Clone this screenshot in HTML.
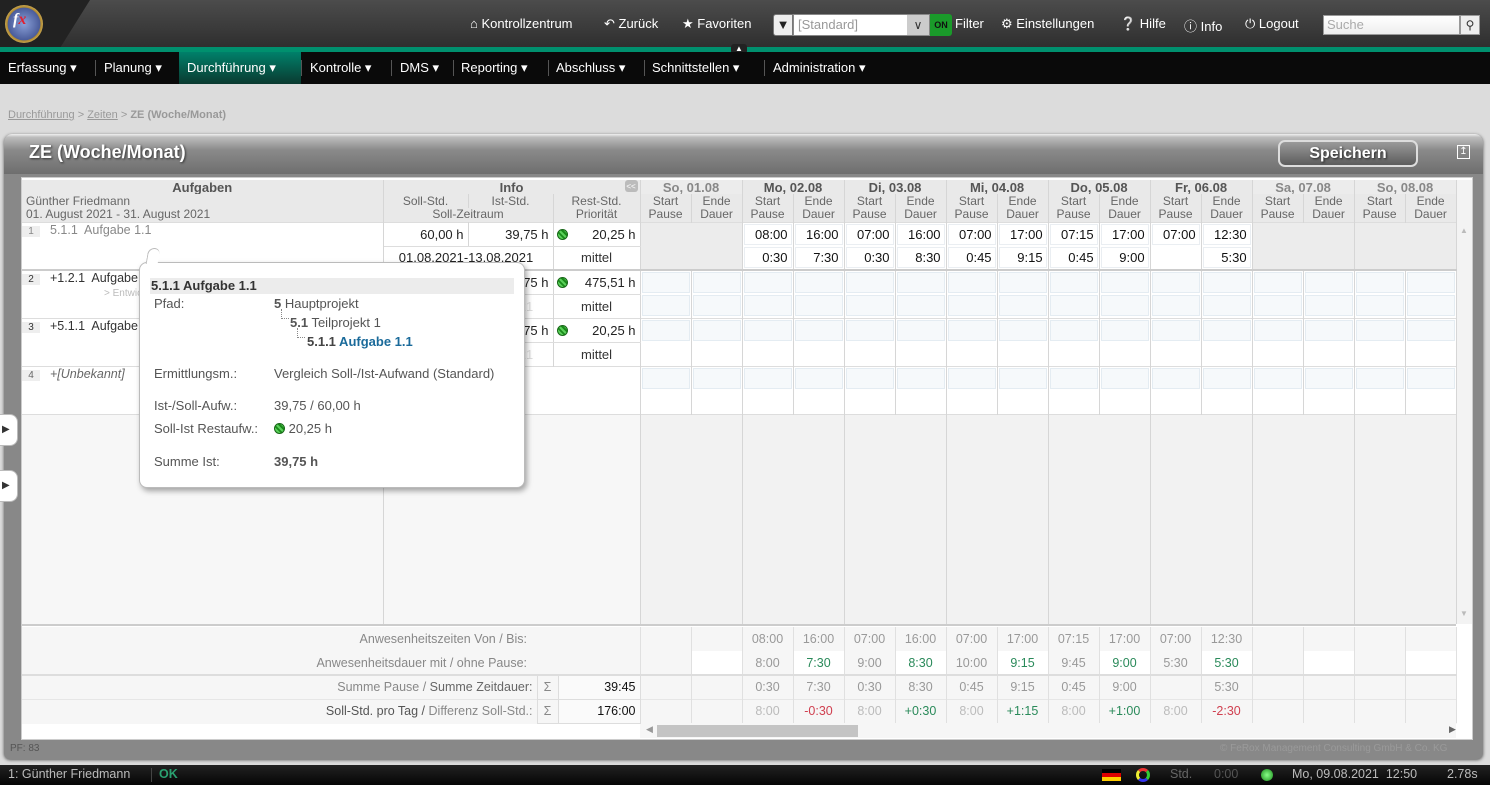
<!DOCTYPE html>
<html><head><meta charset="utf-8"><style>
*{box-sizing:border-box;margin:0;padding:0}
body{width:1490px;height:785px;overflow:hidden;background:#dcdcdc;font-family:"Liberation Sans",sans-serif;font-size:12px;color:#333;position:relative}
.a{position:absolute}
#top{left:0;top:0;width:1490px;height:48px;background:linear-gradient(#4c4c4c,#3a3a3a 60%,#2e2e2e)}
#green{left:0;top:47px;width:1490px;height:5px;background:#00906e}
#nav{left:0;top:52px;width:1490px;height:32px;background:#0a0a0a}
.tl{color:#fff;font-size:13px;top:16px;white-space:nowrap}
.mi{position:absolute;top:0;height:32px;line-height:31px;color:#fff;font-size:13px;padding:0 8px;white-space:nowrap}
.sep{position:absolute;top:8px;width:1px;height:16px;background:#555}
table{border-collapse:collapse;table-layout:fixed}
td{padding:0;white-space:nowrap;overflow:hidden}
#g td{border-right:1px solid #d6d6d6}
.h{background:#e9e9e9;color:#666;text-align:center;font-size:12px;line-height:13px}
.hb{font-weight:bold;color:#555;font-size:13px}
.we{background:#ececec}
.ib{display:block;margin:1px;height:21px;background:#fff;border:1px solid #eaeef2;text-align:right;padding-right:3px;line-height:20px;font-size:13px;color:#111}
.eb{display:block;margin:1px;height:21px;background:#f6f9fb;border:1px solid #e4ecf2}
.r{text-align:right;padding-right:4px !important;font-size:13px;color:#222}
.f td{border-right:1px solid #e0e0e0;text-align:center;font-size:12.5px;color:#999;height:24px}
.gr{color:#2a8a5a !important}.rd{color:#d04050 !important}
.dot{display:inline-block;width:11px;height:11px;border-radius:50%;background:repeating-linear-gradient(45deg,#1a8a1a 0 2px,#5ad05a 2px 4px);border:1px solid #176617;vertical-align:-1px}
</style></head><body>
<div id="top" class="a">
 <div class="a" style="left:0;top:0;width:90px;height:48px;background:#222;clip-path:polygon(0 0,90px 0,60px 48px,0 48px)"></div>
 <div class="a" style="left:5px;top:5px;width:38px;height:38px;border-radius:50%;background:radial-gradient(#8aa0d8,#4a5c9a 60%,#b08a30 62%,#e0c070 80%,#8a6a20);"></div>
 <div class="a" style="left:13px;top:11px;color:#fff;font:italic bold 16px 'Liberation Serif',serif">f<span style="color:#e02030">x</span></div>
 <div class="a tl" style="left:470px">&#8962; Kontrollzentrum</div>
 <div class="a tl" style="left:604px">&#8630; Zurück</div>
 <div class="a tl" style="left:682px">&#9733; Favoriten</div>
 <div class="a" style="left:773px;top:14px;width:20px;height:22px;background:#eee;border:1px solid #777;border-radius:3px 0 0 3px;font-size:13px;text-align:center;line-height:20px;color:#222">&#9660;</div>
 <div class="a" style="left:793px;top:14px;width:137px;height:22px;background:#fff;border:1px solid #888;color:#999;font-size:13px;line-height:20px;padding-left:4px">[Standard]</div>
 <div class="a" style="left:907px;top:15px;width:22px;height:20px;background:#ccc;text-align:center;color:#333;line-height:20px">&#8744;</div>
 <div class="a" style="left:930px;top:14px;width:22px;height:22px;background:#1a9a2a;color:#111;font-size:9px;font-weight:bold;text-align:center;line-height:22px;border-radius:0 3px 3px 0">ON</div>
 <div class="a tl" style="left:955px">Filter</div>
 <div class="a tl" style="left:1001px">&#9881; Einstellungen</div>
 <div class="a tl" style="left:1120px">&#10068; Hilfe</div>
 <div class="a tl" style="left:1184px">&#9432; Info</div>
 <div class="a tl" style="left:1245px">&#9211; Logout</div>
 <div class="a" style="left:1323px;top:15px;width:137px;height:20px;background:linear-gradient(#fff,#eee);border:1px solid #999;color:#aaa;font-size:13px;line-height:18px;padding-left:3px">Suche</div>
 <div class="a" style="left:1460px;top:15px;width:20px;height:20px;background:#eee;border:1px solid #999;text-align:center;line-height:18px;color:#333">&#9906;</div>
</div>
<div id="green" class="a"></div>
<div class="a" style="left:731px;top:44px;width:16px;height:10px;background:#222;border-radius:3px;color:#fff;font-size:8px;text-align:center;line-height:10px">&#9650;</div>
<div id="nav" class="a">
 <div class="mi" style="left:0">Erfassung ▾</div><div class="sep" style="left:95px"></div>
 <div class="mi" style="left:96px">Planung ▾</div><div class="sep" style="left:179px"></div>
 <div class="mi" style="left:179px;width:122px;background:linear-gradient(#00806a,#0a3a30)">Durchführung ▾</div><div class="sep" style="left:301px"></div>
 <div class="mi" style="left:302px">Kontrolle ▾</div><div class="sep" style="left:391px"></div>
 <div class="mi" style="left:392px">DMS ▾</div><div class="sep" style="left:453px"></div>
 <div class="mi" style="left:453px">Reporting ▾</div><div class="sep" style="left:548px"></div>
 <div class="mi" style="left:548px">Abschluss ▾</div><div class="sep" style="left:644px"></div>
 <div class="mi" style="left:644px">Schnittstellen ▾</div><div class="sep" style="left:764px"></div>
 <div class="mi" style="left:765px">Administration ▾</div>
</div>
<div class="a" style="left:8px;top:109px;font-size:11px;color:#999"><u>Durchführung</u> &gt; <u>Zeiten</u> &gt; <b>ZE (Woche/Monat)</b></div>

<div class="a" style="left:4px;top:134px;width:1479px;height:625px;background:#888;border-radius:8px 8px 6px 6px;box-shadow:0 1px 3px #555"></div>
<div class="a" style="left:4px;top:134px;width:1479px;height:40px;background:linear-gradient(#f0f0f0 0,#bdbdbd 8%,#8a8a8a 40%,#6e6e6e);border-radius:8px 8px 0 0"></div>
<div class="a" style="left:29px;top:142px;color:#fff;font-size:18px;font-weight:bold;text-shadow:1px 1px 2px #333">ZE (Woche/Monat)</div>
<div class="a" style="left:1278px;top:140px;width:140px;height:27px;border-radius:7px;border:2px solid #ddd;background:linear-gradient(#9a9a9a,#5c5c5c);color:#fff;font-weight:bold;font-size:16px;text-align:center;line-height:23px;text-shadow:1px 1px 2px #222">Speichern</div>
<div class="a" style="left:1457px;top:145px;width:13px;height:14px;border:1px solid #fff;color:#fff;font-size:10px;text-align:center;line-height:12px">&#8613;</div>
<div class="a" style="left:10px;top:743px;font-size:10px;color:#555">PF: 83</div>
<div class="a" style="left:1220px;top:743px;font-size:10px;color:#9a9a9a">© FeRox Management Consulting GmbH &amp; Co. KG</div>

<div class="a" style="left:21px;top:177px;width:1452px;height:563px;background:#fff;border:1px solid #ccc"></div>
<div class="a" style="left:1456px;top:180px;width:16px;height:444px;background:#f3f3f3;color:#bbb;font-size:8px;text-align:center"><div style="margin-top:46px">▲</div><div style="margin-top:374px">▼</div></div>

<table id="g" class="a" style="left:22px;top:180px;width:1434px">
<colgroup><col style="width:361px"><col style="width:85px"><col style="width:85px"><col style="width:87px">
<col style="width:51px"><col style="width:51px"><col style="width:51px"><col style="width:51px"><col style="width:51px"><col style="width:51px"><col style="width:51px"><col style="width:51px"><col style="width:51px"><col style="width:51px"><col style="width:51px"><col style="width:51px"><col style="width:51px"><col style="width:51px"><col style="width:51px"><col style="width:51px"></colgroup>
<tr style="height:14px"><td class="h hb">Aufgaben</td><td class="h hb" colspan="3" style="position:relative">Info<span style="position:absolute;right:2px;top:0;width:13px;height:12px;background:#bbb;border-radius:3px;font-size:8px;color:#eee">&lt;&lt;</span></td>
<td class="h hb we" colspan="2" style="color:#888">So, 01.08</td><td class="h hb" colspan="2">Mo, 02.08</td><td class="h hb" colspan="2">Di, 03.08</td><td class="h hb" colspan="2">Mi, 04.08</td><td class="h hb" colspan="2">Do, 05.08</td><td class="h hb" colspan="2">Fr, 06.08</td><td class="h hb we" colspan="2" style="color:#888">Sa, 07.08</td><td class="h hb we" colspan="2" style="color:#888">So, 08.08</td></tr>
<tr style="height:14px"><td class="h" style="text-align:left;padding-left:4px">Günther Friedmann</td><td class="h">Soll-Std.</td><td class="h">Ist-Std.</td><td class="h">Rest-Std.</td>
<td class="h">Start</td><td class="h">Ende</td><td class="h">Start</td><td class="h">Ende</td><td class="h">Start</td><td class="h">Ende</td><td class="h">Start</td><td class="h">Ende</td><td class="h">Start</td><td class="h">Ende</td><td class="h">Start</td><td class="h">Ende</td><td class="h">Start</td><td class="h">Ende</td><td class="h">Start</td><td class="h">Ende</td></tr>
<tr style="height:14px"><td class="h" style="text-align:left;padding-left:4px">01. August 2021 - 31. August 2021</td><td class="h" colspan="2">Soll-Zeitraum</td><td class="h">Priorität</td>
<td class="h">Pause</td><td class="h">Dauer</td><td class="h">Pause</td><td class="h">Dauer</td><td class="h">Pause</td><td class="h">Dauer</td><td class="h">Pause</td><td class="h">Dauer</td><td class="h">Pause</td><td class="h">Dauer</td><td class="h">Pause</td><td class="h">Dauer</td><td class="h">Pause</td><td class="h">Dauer</td><td class="h">Pause</td><td class="h">Dauer</td></tr>
<!-- row1 -->
<tr style="height:24px;border-top:1px solid #ddd"><td rowspan="2" style="vertical-align:top;color:#888;font-size:12.5px"><span style="display:inline-block;width:18px;background:#eee;text-align:center;font-size:10px;margin:1px 10px 0 0">1</span>5.1.1&nbsp; Aufgabe 1.1</td>
<td class="r" style="border-bottom:1px solid #ddd">60,00 h</td><td class="r" style="border-bottom:1px solid #ddd">39,75 h</td><td class="r" style="border-bottom:1px solid #ddd;position:relative"><span class="dot" style="position:absolute;left:3px;top:6px"></span>20,25 h</td>
<td colspan="2" rowspan="2" class="we"></td>
<td><span class="ib">08:00</span></td><td><span class="ib">16:00</span></td><td><span class="ib">07:00</span></td><td><span class="ib">16:00</span></td><td><span class="ib">07:00</span></td><td><span class="ib">17:00</span></td><td><span class="ib">07:15</span></td><td><span class="ib">17:00</span></td><td><span class="ib">07:00</span></td><td><span class="ib">12:30</span></td>
<td colspan="2" rowspan="2" class="we"></td><td colspan="2" rowspan="2" class="we"></td></tr>
<tr style="height:24px"><td colspan="2" class="r" style="text-align:center">01.08.2021-13.08.2021</td><td style="text-align:center;font-size:13px">mittel</td>
<td><span class="ib">0:30</span></td><td><span class="ib">7:30</span></td><td><span class="ib">0:30</span></td><td><span class="ib">8:30</span></td><td><span class="ib">0:45</span></td><td><span class="ib">9:15</span></td><td><span class="ib">0:45</span></td><td><span class="ib">9:00</span></td><td><span class="ib" style="border-color:#fff"></span></td><td><span class="ib">5:30</span></td></tr>
<!-- row2 -->
<tr style="height:24px;border-top:2px solid #ccc"><td rowspan="2" style="vertical-align:top;color:#333;font-size:12.5px"><span style="display:inline-block;width:18px;background:#eee;text-align:center;font-size:10px;margin:1px 10px 0 0">2</span>+1.2.1&nbsp; Aufgabe 2021 II 1<br><span style="font-size:10px;color:#bbb;padding-left:82px">&gt; Entwicklung (Standard)</span></td>
<td class="r" style="border-bottom:1px solid #ddd"></td><td class="r" style="border-bottom:1px solid #ddd">39,75 h</td><td class="r" style="border-bottom:1px solid #ddd;position:relative"><span class="dot" style="position:absolute;left:3px;top:6px"></span>475,51 h</td>
<td><span class="eb"></span></td><td><span class="eb"></span></td><td><span class="eb"></span></td><td><span class="eb"></span></td><td><span class="eb"></span></td><td><span class="eb"></span></td><td><span class="eb"></span></td><td><span class="eb"></span></td><td><span class="eb"></span></td><td><span class="eb"></span></td><td><span class="eb"></span></td><td><span class="eb"></span></td><td><span class="eb"></span></td><td><span class="eb"></span></td><td><span class="eb"></span></td><td><span class="eb"></span></td></tr>
<tr style="height:24px"><td colspan="2" class="r" style="color:#ddd;text-align:center">01.04.2021-30.06.2021</td><td style="text-align:center;font-size:13px">mittel</td>
<td><span class="eb"></span></td><td><span class="eb"></span></td><td><span class="eb"></span></td><td><span class="eb"></span></td><td><span class="eb"></span></td><td><span class="eb"></span></td><td><span class="eb"></span></td><td><span class="eb"></span></td><td><span class="eb"></span></td><td><span class="eb"></span></td><td><span class="eb"></span></td><td><span class="eb"></span></td><td><span class="eb"></span></td><td><span class="eb"></span></td><td><span class="eb"></span></td><td><span class="eb"></span></td></tr>
<!-- row3 -->
<tr style="height:24px;border-top:1px solid #ddd"><td rowspan="2" style="vertical-align:top;color:#333;font-size:12.5px"><span style="display:inline-block;width:18px;background:#eee;text-align:center;font-size:10px;margin:1px 10px 0 0">3</span>+5.1.1&nbsp; Aufgabe 1.1</td>
<td class="r" style="border-bottom:1px solid #ddd;color:#ddd">60,00 h</td><td class="r" style="border-bottom:1px solid #ddd">39,75 h</td><td class="r" style="border-bottom:1px solid #ddd;position:relative"><span class="dot" style="position:absolute;left:3px;top:6px"></span>20,25 h</td>
<td><span class="eb"></span></td><td><span class="eb"></span></td><td><span class="eb"></span></td><td><span class="eb"></span></td><td><span class="eb"></span></td><td><span class="eb"></span></td><td><span class="eb"></span></td><td><span class="eb"></span></td><td><span class="eb"></span></td><td><span class="eb"></span></td><td><span class="eb"></span></td><td><span class="eb"></span></td><td><span class="eb"></span></td><td><span class="eb"></span></td><td><span class="eb"></span></td><td><span class="eb"></span></td></tr>
<tr style="height:24px"><td colspan="2" class="r" style="color:#ddd;text-align:center">01.08.2021-13.08.2021</td><td style="text-align:center;font-size:13px">mittel</td>
<td></td><td></td><td></td><td></td><td></td><td></td><td></td><td></td><td></td><td></td><td></td><td></td><td></td><td></td><td></td><td></td></tr>
<!-- row4 -->
<tr style="height:48px;border-top:1px solid #ddd;border-bottom:1px solid #ddd"><td style="vertical-align:top;color:#666;font-size:12.5px;font-style:italic"><span style="display:inline-block;width:18px;background:#eee;text-align:center;font-size:10px;margin:1px 10px 0 0;font-style:normal">4</span>+[Unbekannt]</td>
<td colspan="3"></td>
<td style="vertical-align:top"><span class="eb"></span></td><td style="vertical-align:top"><span class="eb"></span></td><td style="vertical-align:top"><span class="eb"></span></td><td style="vertical-align:top"><span class="eb"></span></td><td style="vertical-align:top"><span class="eb"></span></td><td style="vertical-align:top"><span class="eb"></span></td><td style="vertical-align:top"><span class="eb"></span></td><td style="vertical-align:top"><span class="eb"></span></td><td style="vertical-align:top"><span class="eb"></span></td><td style="vertical-align:top"><span class="eb"></span></td><td style="vertical-align:top"><span class="eb"></span></td><td style="vertical-align:top"><span class="eb"></span></td><td style="vertical-align:top"><span class="eb"></span></td><td style="vertical-align:top"><span class="eb"></span></td><td style="vertical-align:top"><span class="eb"></span></td><td style="vertical-align:top"><span class="eb"></span></td></tr>
<tr style="height:210px"><td style="background:#f7f7f7"></td><td colspan="3" style="background:#f7f7f7"></td>
<td colspan="2" style="background:#f2f2f2"></td><td colspan="2" style="background:#f2f2f2"></td><td colspan="2" style="background:#f2f2f2"></td><td colspan="2" style="background:#f2f2f2"></td><td colspan="2" style="background:#f2f2f2"></td><td colspan="2" style="background:#f2f2f2"></td><td colspan="2" style="background:#f2f2f2"></td><td colspan="2" style="background:#f2f2f2"></td></tr>
</table>
<div class="a" style="left:22px;top:624px;width:1434px;height:2px;background:#ccc"></div>

<table class="a f" style="left:22px;top:627px;width:1434px;background:#f6f6f6">
<colgroup><col style="width:515px"><col style="width:21px"><col style="width:82px"><col span="16" style="width:51px"></colgroup>
<tr><td style="text-align:right;padding-right:10px;color:#888;border:0">Anwesenheitszeiten Von / Bis:</td><td style="border:0"></td><td></td><td></td><td></td><td>08:00</td><td>16:00</td><td>07:00</td><td>16:00</td><td>07:00</td><td>17:00</td><td>07:15</td><td>17:00</td><td>07:00</td><td>12:30</td><td></td><td></td><td></td><td></td></tr>
<tr><td style="text-align:right;padding-right:10px;color:#888;border:0">Anwesenheitsdauer mit / ohne Pause:</td><td style="border:0"></td><td></td><td></td><td style="background:#fff"></td><td>8:00</td><td class="gr" style="background:#fff">7:30</td><td>9:00</td><td class="gr" style="background:#fff">8:30</td><td>10:00</td><td class="gr" style="background:#fff">9:15</td><td>9:45</td><td class="gr" style="background:#fff">9:00</td><td>5:30</td><td class="gr" style="background:#fff">5:30</td><td></td><td style="background:#fff"></td><td></td><td style="background:#fff"></td></tr>
<tr style="border-top:2px solid #ddd"><td style="text-align:right;padding-right:4px;color:#888;border:0">Summe Pause / <span style="color:#666">Summe Zeitdauer:</span></td><td style="border:1px solid #ddd;color:#888">Σ</td><td style="text-align:right;padding-right:4px;color:#111;background:#fafafa;border:1px solid #ddd">39:45</td><td></td><td></td><td>0:30</td><td>7:30</td><td>0:30</td><td>8:30</td><td>0:45</td><td>9:15</td><td>0:45</td><td>9:00</td><td></td><td>5:30</td><td></td><td></td><td></td><td></td></tr>
<tr style="border-top:1px solid #e6e6e6"><td style="text-align:right;padding-right:4px;color:#555;border:0">Soll-Std. pro Tag / <span style="color:#888">Differenz Soll-Std.:</span></td><td style="border:1px solid #ddd;color:#888">Σ</td><td style="text-align:right;padding-right:4px;color:#111;background:#fafafa;border:1px solid #ddd">176:00</td><td></td><td></td><td style="color:#bbb">8:00</td><td class="rd">-0:30</td><td style="color:#bbb">8:00</td><td class="gr">+0:30</td><td style="color:#bbb">8:00</td><td class="gr">+1:15</td><td style="color:#bbb">8:00</td><td class="gr">+1:00</td><td style="color:#bbb">8:00</td><td class="rd">-2:30</td><td></td><td></td><td></td><td></td></tr>
</table>
<div class="a" style="left:640px;top:724px;width:816px;height:14px;background:#f6f6f6"></div>
<div class="a" style="left:657px;top:725px;width:201px;height:12px;background:#c4c4c4"></div>
<div class="a" style="left:646px;top:724px;font-size:9px;color:#999">◀</div>
<div class="a" style="left:1449px;top:724px;font-size:9px;color:#666">▶</div>

<div class="a" style="left:0;top:414px;width:18px;height:32px;background:#fff;border:1px solid #bbb;border-left:0;border-radius:0 8px 8px 0;font-size:10px;line-height:30px;padding-left:2px">▶</div>
<div class="a" style="left:0;top:470px;width:18px;height:32px;background:#fff;border:1px solid #bbb;border-left:0;border-radius:0 8px 8px 0;font-size:10px;line-height:30px;padding-left:2px">▶</div>

<!-- tooltip -->
<div class="a" style="left:139px;top:262px;width:386px;height:226px;background:#fff;border:1px solid #bbb;border-radius:8px;box-shadow:2px 3px 6px rgba(0,0,0,.35);font-size:13px;color:#555">
 <div class="a" style="left:10px;top:15px;width:364px;height:16px;background:#ececec;font-weight:bold;color:#333;padding-left:1px;line-height:16px">5.1.1 Aufgabe 1.1</div>
 <div class="a" style="left:14px;top:33px">Pfad:</div>
 <div class="a" style="left:134px;top:33px"><b>5</b> Hauptprojekt</div>
 <div class="a" style="left:141px;top:46px;width:8px;height:10px;border-left:1px dotted #888;border-bottom:1px dotted #888"></div>
 <div class="a" style="left:150px;top:52px"><b>5.1</b> Teilprojekt 1</div>
 <div class="a" style="left:157px;top:65px;width:8px;height:10px;border-left:1px dotted #888;border-bottom:1px dotted #888"></div>
 <div class="a" style="left:167px;top:71px;color:#1a6a9a;font-weight:bold"><span style="color:#444">5.1.1</span> Aufgabe 1.1</div>
 <div class="a" style="left:14px;top:103px">Ermittlungsm.:</div>
 <div class="a" style="left:134px;top:103px">Vergleich Soll-/Ist-Aufwand (Standard)</div>
 <div class="a" style="left:14px;top:135px">Ist-/Soll-Aufw.:</div>
 <div class="a" style="left:134px;top:135px">39,75 / 60,00 h</div>
 <div class="a" style="left:14px;top:158px">Soll-Ist Restaufw.:</div>
 <div class="a" style="left:134px;top:158px"><span class="dot"></span> 20,25 h</div>
 <div class="a" style="left:14px;top:191px">Summe Ist:</div>
 <div class="a" style="left:134px;top:191px;font-weight:bold">39,75 h</div>
</div>
<div class="a" style="left:147px;top:248px;width:12px;height:16px;background:#fff;border-left:1px solid #bbb;border-top:1px solid #bbb;border-radius:6px 6px 0 0;transform:skewX(-10deg)"></div>

<div class="a" style="left:0;top:765px;width:1490px;height:20px;background:linear-gradient(#222,#050505);color:#bbb;font-size:12.5px;line-height:19px">
 <span class="a" style="left:8px">1: Günther Friedmann</span>
 <span class="a" style="left:151px;top:3px;width:1px;height:14px;background:#444"></span>
 <span class="a" style="left:159px;color:#2aa070;font-weight:bold">OK</span>
 <span class="a" style="left:1102px;top:4px;width:19px;height:12px;background:linear-gradient(#000 33%,#d00 33% 66%,#fc0 66%)"></span>
 <span class="a" style="left:1136px;top:3px;width:14px;height:14px;border-radius:50%;border:3px solid;border-color:#e33 #3c3 #33e #ee3"></span>
 <span class="a" style="left:1170px;color:#666">Std.</span>
 <span class="a" style="left:1214px;color:#555">0:00</span>
 <span class="a" style="left:1261px;top:4px;width:12px;height:12px;border-radius:50%;background:radial-gradient(#8f8,#1a8a1a)"></span>
 <span class="a" style="left:1292px">Mo, 09.08.2021&nbsp; 12:50</span>
 <span class="a" style="left:1447px">2.78s</span>
</div>
</body></html>
